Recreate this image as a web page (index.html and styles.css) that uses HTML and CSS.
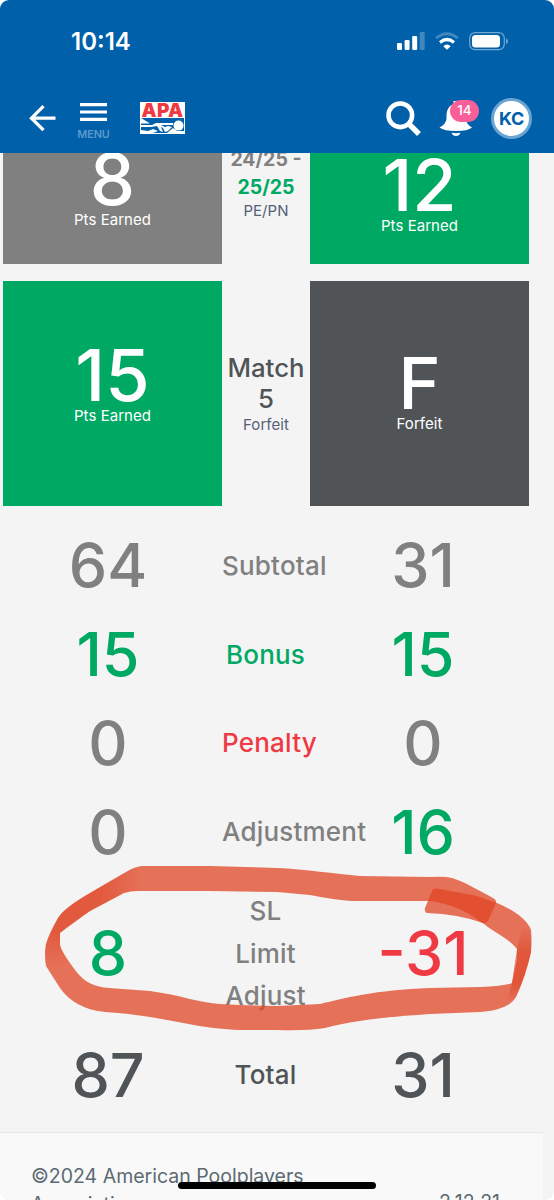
FILE: index.html
```html
<!DOCTYPE html>
<html lang="en">
<head>
<meta charset="utf-8">
<title>Match score</title>
<link rel="stylesheet" href="styles.css">
</head>
<body>
<div class="phone">
  <header class="header">
    <div class="status">
      <span class="clock">10:14</span>
      <svg class="status-icons" width="112" height="20" viewBox="0 0 112 20">
        <g fill="#fff">
          <rect x="0" y="11" width="5" height="7" rx="1.3"/>
          <rect x="7.6" y="8" width="5" height="10" rx="1.3"/>
          <rect x="15.2" y="4" width="5" height="14" rx="1.3"/>
          <rect x="22.7" y="0" width="5" height="18" rx="1.3" opacity=".25"/>
          <path d="M46.3 14.2Q50 11 53.7 14.2L50 17.8z"/>
        </g>
        <path d="M43 10.4Q50 4.6 57 10.4" fill="none" stroke="#fff" stroke-width="3.2"/>
        <path d="M39.2 6.2Q50-2.8 60.8 6.2" fill="none" stroke="#fff" stroke-width="3" opacity=".25"/>
        <rect x="72.7" y=".7" width="34.6" height="17" rx="5.4" fill="none" stroke="#fff" stroke-width="1.2" opacity=".45"/>
        <rect x="75" y="3" width="28" height="12.5" rx="3.5" fill="#fff"/>
        <path d="M109 6.3q2 1 2 3t-2 3z" fill="#fff" opacity=".45"/>
      </svg>
    </div>
    <nav class="nav">
      <svg class="back" width="27" height="27" viewBox="0 0 27 27" fill="none" stroke="#fff" stroke-width="3.3"><path d="M14.5 1.2 2.5 13.2l12 12M2.5 13.2H26.5"/></svg>
      <div class="menu">
        <svg width="27" height="19" viewBox="0 0 27 19" fill="#fff"><path d="M0 0h27v3.2H0zM0 7.4h27v3.2H0zM0 14.8h27V18H0z"/></svg>
        <span>MENU</span>
      </div>
      <div class="logo">
        <span>APA</span>
        <svg width="43" height="15" viewBox="0 0 43 15">
          <rect width="43" height="15" fill="#0060aa"/>
          <path d="M0 0 9 5.5H0z" fill="#fff"/>
          <path d="M0 7H11L15 5H32V7H20L24 9 27 8 31 9 27 13 24 14 22 10 20 9 22 14 19 13 16 8 10 9H0zM0 15V12L7 13 12 11 17 13 12 15zM26 15 32 10 36 13H43V15z" fill="#fff"/>
          <circle cx="37.5" cy="7.6" r="5" fill="#fff"/>
        </svg>
      </div>
      <svg class="search" width="36" height="36" viewBox="0 0 36 36" fill="none" stroke="#fff"><circle cx="14.3" cy="14.3" r="11.8" stroke-width="4.6"/><path d="M22.5 22.5 33 33" stroke-width="5.4"/></svg>
      <div class="bell">
        <svg width="34" height="36" viewBox="0 0 34 36" fill="#fff"><path d="M14.5 0h5v3Q27 6 27 14v5Q28 24 33 26.5 29 30 17 30T.5 26.5Q7 23 7.5 18v-4Q7.5 6 14.5 3zM12.5 31.8Q17 32.5 21.5 31.8 20 35 17 35t-4.5-3.2z"/></svg>
        <span class="badge">14</span>
      </div>
      <div class="avatar">KC</div>
    </nav>
  </header>

  <main class="board">
    <section class="match partial">
      <div class="tile gray"><b>8</b><small>Pts Earned</small></div>
      <div class="mid"><span class="race">24/25 -</span><span class="race won">25/25</span><small>PE/PN</small></div>
      <div class="tile green twelve"><b>12</b><small>Pts Earned</small></div>
    </section>
    <section class="match full">
      <div class="tile green"><b>15</b><small>Pts Earned</small></div>
      <div class="mid"><span class="title">Match<br>5</span><small>Forfeit</small></div>
      <div class="tile dark"><b>F</b><small>Forfeit</small></div>
    </section>

    <section class="totals">
      <div class="row"><b>64</b><span>Subtotal</span><b>31</b></div>
      <div class="row"><b class="pos">15</b><span class="pos">Bonus</span><b class="pos">15</b></div>
      <div class="row"><b>0</b><span class="neg">Penalty</span><b>0</b></div>
      <div class="row"><b>0</b><span>Adjustment</span><b class="pos">16</b></div>
      <div class="row tall"><b class="pos">8</b><span>SL<br>Limit<br>Adjust</span><b class="neg">-31</b></div>
      <div class="row sum"><b>87</b><span>Total</span><b>31</b></div>
    </section>
  </main>

  <footer class="footer">
    <p>©2024 American Poolplayers<br>Association</p>
    <span>2.12.21</span>
  </footer>

  <svg class="marker" width="554" height="1200" viewBox="0 0 554 1200">
    <defs>
      <linearGradient id="fade" x1="60" y1="0" x2="142" y2="0" gradientUnits="userSpaceOnUse"><stop offset=".5" stop-color="#e04a2c" stop-opacity=".6"/><stop offset="1" stop-color="#e04a2c" stop-opacity="0"/></linearGradient>
      <linearGradient id="tail" x1="0" y1="925" x2="0" y2="1002" gradientUnits="userSpaceOnUse"><stop offset="0" stop-color="#e04a2c" stop-opacity="0"/><stop offset=".35" stop-color="#e04a2c" stop-opacity=".65"/><stop offset=".75" stop-color="#e04a2c" stop-opacity=".75"/><stop offset="1" stop-color="#e04a2c" stop-opacity="0"/></linearGradient>
      <linearGradient id="left" x1="0" y1="933" x2="0" y2="966" gradientUnits="userSpaceOnUse"><stop offset="0" stop-color="#e04a2c" stop-opacity=".6"/><stop offset="1" stop-color="#e04a2c" stop-opacity="0"/></linearGradient>
    </defs>
    <g class="ink">
      <path d="M60 933C68 926 78 919 90 911L124 893Q130 891 138 891L210 891 277 892 310 895Q335 900 352 901L430 901Q460 905 482 923Q486 924 488 921L496 903Q497 900 493 898C480 891 465 882 452 878Q444 876 430 877L360 876C335 874 305 869 277 868L210 866H142Q134 867 126 872L90 893Q64 908 58 918 49 933 46 944 44 955 46 966L60 988C70 1002 85 1010 105 1012Q125 1013 150 1017C182 1022 205 1029 240 1030L240 1005 220 1004C200 1003 180 995 150 991L109 988C95 987 85 983 75 970Q61 951 60 945Z"/>
      <path d="M433 889Q435 888 440 889L477 896 497 903C513 910 527 919 531 930Q532 940 531 952 526 975 516 997C511 1006 498 1011 480 1012L430 1014C385 1017 350 1021 325 1028Q306 1031 277 1030L240 1030V1005L277 1006 320 1004C345 998 375 990 430 988L480 987Q505 986 512 983L517 960V949C510 939 490 930 483 923Q458 914 427 913 424 912 425 908Z"/>
    </g>
    <path fill="url(#fade)" d="M60 933 90 911 124 893Q132 890 142 891V866Q134 867 126 872L90 893Q64 908 58 918L51 933Z"/>
    <path fill="url(#left)" d="M51 933H60V945L67 963 48 970Q44 955 46 944Z"/>
    <path fill="url(#tail)" d="M524 920Q532 928 531 952 526 975 516 997L507 1002 512 983 517 949Z"/>
  </svg>
  <div class="home"></div>
</div>
</body>
</html>
```
FILE: styles.css
```css
* { box-sizing: border-box; }
body { margin: 0; background: #fff; font-family: Inter, sans-serif; }
.phone { position: relative; width: 554px; height: 1200px; overflow: hidden; border-radius: 9px; background: #f4f4f4; display: flex; flex-direction: column; }

.header { height: 153px; flex: none; background: #0060aa; color: #fff; }
.status { height: 84px; padding: 0 46px 0 71px; display: flex; justify-content: space-between; align-items: center; }
.clock { font-size: 24px; font-weight: 600; line-height: 28px; }
.status-icons { margin-right: -1px; }
.nav { height: 69px; padding: 0 22px 0 29px; display: flex; align-items: center; }
.back { flex: none; }
.menu { margin-left: 21px; width: 33px; height: 38px; display: flex; flex-direction: column; align-items: center; margin-top: 7px; }
.menu span { font-size: 10.8px; line-height: 12px; font-weight: 600; margin-top: 7px; color: #5d99ca; }
.logo { width: 45px; height: 32px; margin-left: 30px; margin-top: -1px; background: #fff; display: flex; flex-direction: column; align-items: center; padding-bottom: 1px; }
.logo span { height: 16px; line-height: 17px; font-size: 19px; font-weight: 900; letter-spacing: .3px; color: #ee3a43; }
.search { margin-left: 201px; }
.bell { position: relative; margin-left: 17px; width: 34px; height: 36px; }
.badge { position: absolute; left: 11px; top: -1px; width: 29px; height: 22px; border-radius: 11px; background: #f9609a; font-size: 13.5px; line-height: 20px; text-align: center; font-weight: 500; }
.avatar { flex: none; width: 41px; height: 41px; margin-left: 18px; border-radius: 50%; border: 3px solid #6ba4d2; background: #fff; color: #0060aa; font-size: 18px; font-weight: 700; line-height: 36px; text-align: center; letter-spacing: -.3px; }

.board { height: 979px; overflow: hidden; flex: none; }
.match { display: grid; grid-template-columns: 219px 88px 219px; padding-left: 3px; }
.partial { height: 111px; margin-bottom: 17px; overflow: hidden; }
.full { height: 225px; }
.tile, .mid { display: flex; flex-direction: column; align-items: center; }
.tile { color: #fff; }
.tile b { font-size: 72px; font-weight: 500; line-height: 72px; }
small { font-size: 15px; line-height: 20px; letter-spacing: .05px; }
.gray { background: #808080; }
.green { background: #00a963; }
.dark { background: #505457; }
.partial .tile b { margin-top: -10px; }
.partial .tile small { margin-top: -5px; }
.partial .twelve b { margin-top: -4px; }
.mid small { color: #566078; }
.race { font-size: 19.5px; line-height: 28px; font-weight: 700; color: #808080; white-space: nowrap; }
.partial .race:first-child { margin-top: -8px; }
.race.won { color: #00a963; }
.full .green b { margin-top: 58px; }
.full .tile small { margin-top: -5px; }
.full .dark b { margin-top: 66px; }
.title { margin-top: 71px; font-size: 25.8px; line-height: 31px; font-weight: 500; text-align: center; color: #505457; }
.full .mid small { margin-top: 1px; }

.totals { padding-top: 15.5px; }
.row { display: grid; grid-template-columns: 222px 87px 228px; align-items: center; height: 88.8px; color: #808080; }
.row b { font-size: 61px; line-height: 70px; font-weight: 500; text-align: center; margin-top: -1px; }
.row b:first-child { padding-right: 6px; }
.row span { font-size: 26px; line-height: 42.3px; font-weight: 500; letter-spacing: .2px; text-align: center; white-space: nowrap; }
.row.tall { height: 154.5px; }
.row .pos { color: #00a963; }
.row .neg { color: #f03a43; }
.row.sum { color: #505457; }

.footer { flex: none; width: 543px; height: 68px; border-top: 1px solid #e7e7e7; background: #f9f9f9; display: flex; justify-content: space-between; align-items: flex-start; padding: 29px 43px 0 31px; color: #5c6a72; font-size: 19.5px; line-height: 28px; }
.footer p { margin: 0; }
.footer span { margin-top: 26px; }

.marker { position: absolute; left: 0; top: 0; pointer-events: none; }
.ink { fill: #e04524; fill-opacity: .75; }
.home { position: absolute; left: 178px; top: 1182px; width: 198px; height: 7px; border-radius: 4px; background: #000; }
```
